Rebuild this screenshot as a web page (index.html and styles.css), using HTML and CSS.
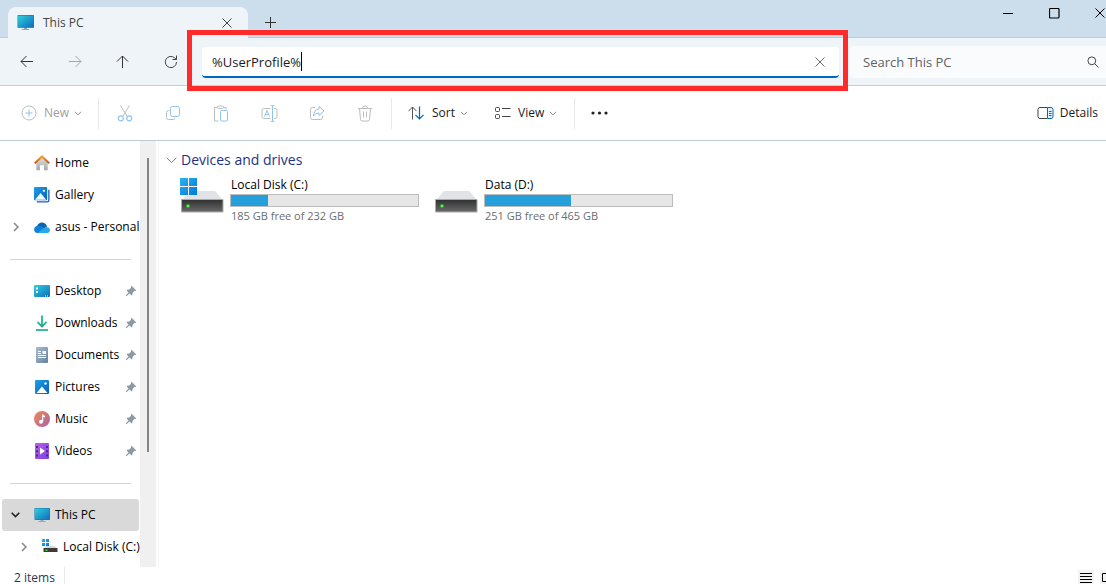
FILE: index.html
```html
<!DOCTYPE html>
<html lang="en">
<head>
<meta charset="utf-8">
<title>This PC</title>
<link rel="stylesheet" href="styles.css">
</head>
<body>
<svg class="defs" aria-hidden="true">
  <defs>
    <linearGradient id="screen" x1="0" y1="0" x2="1" y2="1"><stop offset="0" stop-color="#2fd0dc"/><stop offset="1" stop-color="#0f6cbd"/></linearGradient>
    <linearGradient id="blue" x1="0" y1="0" x2="1" y2="1"><stop offset="0" stop-color="#1fa0e6"/><stop offset="1" stop-color="#0560b8"/></linearGradient>
    <linearGradient id="win" x1="0" y1="0" x2="1" y2="1"><stop offset="0" stop-color="#2bb3f0"/><stop offset="1" stop-color="#0078d7"/></linearGradient>
    <linearGradient id="box" x1="0" y1="0" x2="0" y2="1"><stop offset="0" stop-color="#303030"/><stop offset="1" stop-color="#6a6a6a"/></linearGradient>
    <linearGradient id="music" x1="0" y1="0" x2="1" y2="1"><stop offset="0" stop-color="#f08a54"/><stop offset="1" stop-color="#ac60a8"/></linearGradient>
    <linearGradient id="video" x1="0" y1="0" x2="1" y2="1"><stop offset="0" stop-color="#b95fe6"/><stop offset="1" stop-color="#7d41e0"/></linearGradient>
    <linearGradient id="doc" x1="0" y1="0" x2="1" y2="1"><stop offset="0" stop-color="#a9bdd3"/><stop offset="1" stop-color="#6682a3"/></linearGradient>
    <linearGradient id="wall" x1="0" y1="0" x2="0" y2="1"><stop offset="0" stop-color="#e0e0e0"/><stop offset="1" stop-color="#a8a8a8"/></linearGradient>
    <linearGradient id="roof" x1="0" y1="0" x2="0" y2="1"><stop offset="0" stop-color="#f3a02c"/><stop offset="1" stop-color="#d0501c"/></linearGradient>
    <linearGradient id="down" x1="0" y1="0" x2="0" y2="1"><stop offset="0" stop-color="#2fc3a2"/><stop offset="1" stop-color="#0f9d80"/></linearGradient>
    <symbol id="i-pc" viewBox="0 0 16 16"><path d="M6.500 12h3v2h2v1h-7v-1h2z" fill="#9aa7b2"/><rect x=".5" y="1" width="15.500" height="12" rx=".8" fill="#1273b0"/><rect x="1" y="1.500" width="14.500" height="11" fill="url(#screen)"/></symbol>
    <symbol id="i-pin" viewBox="0 0 12 12"><path d="M6.600.8 11.200 5.400 10.300 6 9.300 5.900 7.500 7.900 7.300 9.800 6.600 10.500 4.500 8.400 1.400 11.300.700 10.600 3.600 7.500 1.500 5.400 2.200 4.700 4.200 4.500 6.100 2.700 6 1.500z" fill="#8c98a2"/></symbol>
    <symbol id="i-chev" viewBox="0 0 8 5"><path d="M1 .8 4 3.800 7 .8" fill="none" stroke="currentColor"/></symbol>
    <symbol id="i-right" viewBox="0 0 6 10"><path d="M1 1 5 5 1 9" fill="none" stroke="#858585" stroke-width="1.500"/></symbol>
    <symbol id="i-x" viewBox="0 0 12 12"><path d="M1.500 1.500l9 9M10.500 1.500l-9 9" fill="none" stroke="currentColor"/></symbol>
    <symbol id="i-drive" viewBox="0 0 44 26"><path d="M10 1h25l8 9H2z" fill="#e1e3e6"/><path d="M1.500 9.500h41.500v12.500H1.500z" fill="url(#box)" stroke="#aaa"/><circle cx="8" cy="16" r="2" fill="#27b52c"/><circle cx="8" cy="16" r="1" fill="#7cff74"/></symbol>
  </defs>
</svg>
<div class="window">
  <header class="titlebar">
    <div class="tab">
      <svg width="17" height="17"><use href="#i-pc"/></svg>
      <span class="tab-name">This PC</span>
      <button class="plain" aria-label="Close tab"><svg width="12" height="12"><use href="#i-x"/></svg></button>
    </div>
    <button class="plain new-tab" aria-label="New tab"><svg width="11" height="11" viewBox="0 0 11 11"><path d="M5.500 0v11M0 5.500h11" stroke="#333"/></svg></button>
    <div class="caption">
      <button class="plain" aria-label="Minimize"><svg width="10" height="11" viewBox="0 0 10 11"><path d="M0 5.500h10" stroke="#000"/></svg></button>
      <button class="plain" aria-label="Maximize"><svg width="11" height="11" viewBox="0 0 11 11"><rect x=".5" y=".5" width="9.500" height="9.500" rx="1" fill="none" stroke="#000" stroke-width="1.200"/></svg></button>
      <button class="plain" aria-label="Close"><svg width="12" height="12"><use href="#i-x"/></svg></button>
    </div>
  </header>

  <nav class="navbar" aria-label="Navigation">
    <button class="plain nav-btn" aria-label="Back"><svg width="14" height="14" viewBox="0 0 14 14"><path d="M13 6.500H1M6.500 1 1 6.500 6.500 12" fill="none" stroke="#333"/></svg></button>
    <button class="plain nav-btn" aria-label="Forward"><svg width="14" height="14" viewBox="0 0 14 14"><path d="M1 6.500H13M7.500 1 13 6.500 7.500 12" fill="none" stroke="#a5a8aa"/></svg></button>
    <button class="plain nav-btn" aria-label="Up"><svg width="14" height="14" viewBox="0 0 14 14"><path d="M6.500 13V1M1 6.500 6.500 1 12 6.500" fill="none" stroke="#333"/></svg></button>
    <button class="plain nav-btn" aria-label="Refresh"><svg width="14" height="14" viewBox="0 0 14 14"><path d="M12.500 7A5.600 5.600 0 1 1 10.800 3L12.500 4.500M12.500.5v4h-4" fill="none" stroke="#444"/></svg></button>
    <div class="address">
      <input class="address-input" type="text" value="%UserProfile%" aria-label="Address"><span class="caret"></span>
      <button class="plain clear" aria-label="Clear"><svg width="12" height="12"><use href="#i-x"/></svg></button>
    </div>
    <div class="search">
      <input class="search-input" type="text" placeholder="Search This PC" aria-label="Search This PC">
      <svg width="12" height="12" viewBox="0 0 12 12"><circle cx="4.800" cy="4.800" r="3.900" fill="none" stroke="#444"/><path d="M7.700 7.700l3.800 3.800" stroke="#444"/></svg>
    </div>
  </nav>

  <div class="toolbar" role="toolbar" aria-label="Commands">
    <button class="cmd new muted"><svg width="16" height="16" viewBox="0 0 16 16"><circle cx="8" cy="8" r="7" fill="none" stroke="#bdbdbd"/><path d="M8 4.500v7M4.500 8h7" stroke="#8fc4ec"/></svg><span>New</span><svg class="chev" width="8" height="5"><use href="#i-chev"/></svg></button>
    <span class="sep"></span>
    <div class="icons">
      <button class="plain" aria-label="Cut"><svg width="16" height="17" viewBox="0 0 16 17"><path d="M3.500.5 10 11M12.500.5 6 11" stroke="#bdbdbd" fill="none"/><circle cx="3.800" cy="13.300" r="2.500" fill="none" stroke="#8fc4ec" stroke-width="1.200"/><circle cx="12.200" cy="13.300" r="2.500" fill="none" stroke="#8fc4ec" stroke-width="1.200"/></svg></button>
      <button class="plain" aria-label="Copy"><svg width="16" height="16" viewBox="0 0 16 16"><path d="M4.500 5.500H3.500Q1.500 5.500 1.500 7.500v5q0 2 2 2h4.500q2 0 2-1.500" fill="none" stroke="#bdbdbd"/><rect x="5.500" y="1.500" width="9" height="10" rx="2" fill="none" stroke="#8fc4ec"/></svg></button>
      <button class="plain" aria-label="Paste"><svg width="16" height="17" viewBox="0 0 16 17"><path d="M4.500 2.500h-3v13.500h4M10.500 2.500h2.500v2" fill="none" stroke="#bdbdbd"/><rect x="4.500" y="1" width="6" height="2.500" rx="1" fill="none" stroke="#bdbdbd"/><rect x="7.500" y="5.500" width="7" height="10.500" rx="1" fill="none" stroke="#8fc4ec"/></svg></button>
      <button class="plain" aria-label="Rename"><svg width="17" height="17" viewBox="0 0 17 17"><path d="M9.500 3.500h-7q-1.500 0-1.500 2v6q0 2 1.500 2h7M13 3.500h1q2 0 2 2v6q0 2-2 2h-1" fill="none" stroke="#bdbdbd"/><path d="M3.500 11.500 6 5.500l2.500 6M4.300 9.500h3.400M9.500.7h4M9.500 16.300h4M11.500.7v15.600" fill="none" stroke="#8fc4ec"/></svg></button>
      <button class="plain" aria-label="Share"><svg width="16" height="16" viewBox="0 0 16 16"><path d="M6 2.500H3.500q-2 0-2 2v8q0 2 2 2h8q2 0 2-2V11" fill="none" stroke="#bdbdbd"/><path d="M10 1.500 15 6l-5 4.500V8Q6.500 7.800 4.500 11 5 4.500 10 4z" fill="none" stroke="#8fc4ec"/></svg></button>
      <button class="plain" aria-label="Delete"><svg width="16" height="17" viewBox="0 0 16 17"><path d="M1 3.500h14M5.500 3q0-2 2.500-2t2.500 2M2.500 3.500l1 11q.2 1.500 1.500 1.500h6q1.300 0 1.500-1.500l1-11M6.500 6.500v6M9.500 6.500v6" fill="none" stroke="#bdbdbd"/></svg></button>
    </div>
    <span class="sep"></span>
    <button class="cmd sort"><svg width="17" height="14" viewBox="0 0 17 14"><path d="M4.500 13.500V1M.5 5.200 4.500 1l4 4.200" fill="none" stroke="#555"/><path d="M11.500.5V13M7.500 8.800l4 4.200 4-4.200" fill="none" stroke="#0067c0" stroke-width="1.200"/></svg><span>Sort</span><svg class="chev" width="8" height="5"><use href="#i-chev"/></svg></button>
    <button class="cmd view"><svg width="17" height="14" viewBox="0 0 17 14"><rect x="1.500" y="1.500" width="4" height="4" rx="1" fill="none" stroke="#444"/><rect x="1.500" y="8.500" width="4" height="4" rx="1" fill="none" stroke="#444"/><path d="M8 2.500h8.500M8 10.500h8.500" stroke="#444"/></svg><span>View</span><svg class="chev" width="8" height="5"><use href="#i-chev"/></svg></button>
    <span class="sep"></span>
    <button class="plain more" aria-label="See more"><svg width="17" height="4" viewBox="0 0 17 4"><g fill="#222"><circle cx="2" cy="2" r="1.600"/><circle cx="8.500" cy="2" r="1.600"/><circle cx="15" cy="2" r="1.600"/></g></svg></button>
    <button class="cmd details"><svg width="17" height="14" viewBox="0 0 17 14"><path d="M10 1.500H3Q1 1.500 1 3.500v7q0 2 2 2h7" fill="none" stroke="#444"/><path d="M10.500 1.500h3.500q2 0 2 2v7q0 2-2 2h-3.500zM12 5.500h2.500M12 7.500h2.500M12 9.500h2.500" fill="#e4f1fb" stroke="#0067c0"/></svg><span>Details</span></button>
  </div>

  <div class="content">
    <aside class="sidebar">
      <a class="row" href="#"><span class="exp"></span><svg width="16" height="16" viewBox="0 0 16 16"><path d="M2.300 7 8 2l5.700 5v8.300H10v-5H6v5H2.300z" fill="url(#wall)"/><path d="M.8 8.300 8 1.500l7.200 6.800" fill="none" stroke="url(#roof)" stroke-width="2"/></svg><span>Home</span></a>
      <a class="row" href="#"><span class="exp"></span><svg width="16" height="16" viewBox="0 0 17 17"><path d="M3 15.800h11q1.800 0 1.800-1.800V3" fill="none" stroke="#1b5cb4" stroke-width="1.400"/><rect x="0" y="0" width="14" height="14" rx="1" fill="url(#blue)"/><path d="M1 13.500 7 6.500l6 7z" fill="#eef8ff"/><circle cx="10.500" cy="4" r="1.200" fill="#fff"/></svg><span>Gallery</span></a>
      <a class="row" href="#"><span class="exp"><svg width="6" height="10"><use href="#i-right"/></svg></span><svg width="16" height="11" viewBox="0 0 16 11"><path d="M3 4Q5 0 8.500.5 12 1 13 4.500L8 8 2 6z" fill="#0364b8"/><path d="M.2 8Q0 4.500 3 4q3-.8 6 1.500L13 7l-4 4H3.500Q.5 10.800.2 8z" fill="#0f80d7"/><path d="M4 10.500 11 5.200q4-1.200 5 2.300 0 3.500-3 3.500H4z" fill="#28a8ea"/></svg><span>asus - Personal</span></a>
      <hr>
      <a class="row" href="#"><span class="exp"></span><svg width="16" height="12" viewBox="0 0 16 12"><rect width="16" height="12" rx="1" fill="url(#screen)"/><path d="M2 2.500h2v2H2zM2 6h2v2H2z" fill="#fff"/><path d="M11 11h4" stroke="#fff" stroke-dasharray="1 1"/></svg><span>Desktop</span><svg class="pin" width="12" height="12"><use href="#i-pin"/></svg></a>
      <a class="row" href="#"><span class="exp"></span><svg width="16" height="16" viewBox="0 0 16 16"><path d="M3.500 7 8 11.500 12.500 7" fill="none" stroke="url(#down)" stroke-width="1.800"/><path d="M2 15h12" stroke="#14a588" stroke-width="1.600"/><path d="M7.100.5h1.800v10.500H7.100z" fill="#22b393"/></svg><span>Downloads</span><svg class="pin" width="12" height="12"><use href="#i-pin"/></svg></a>
      <a class="row" href="#"><span class="exp"></span><svg width="16" height="16" viewBox="0 0 16 16"><rect x="2" width="12" height="16" rx="1" fill="url(#doc)"/><path d="M4 4.500h3M4 6.500h3M4 8.500h8M4 10.500h8" stroke="#fff"/><path d="M8.500 4H12v3H8.500z" fill="#fff"/></svg><span>Documents</span><svg class="pin" width="12" height="12"><use href="#i-pin"/></svg></a>
      <a class="row" href="#"><span class="exp"></span><svg width="16" height="16" viewBox="0 0 16 16"><rect x="1" y="1" width="14" height="14" rx="1" fill="url(#blue)"/><path d="M2.500 14 8 7.500l5.500 6.500z" fill="#fff"/><circle cx="11.500" cy="4.500" r="1.200" fill="#fff"/></svg><span>Pictures</span><svg class="pin" width="12" height="12"><use href="#i-pin"/></svg></a>
      <a class="row" href="#"><span class="exp"></span><svg width="16" height="16" viewBox="0 0 16 16"><circle cx="8" cy="8" r="8" fill="url(#music)"/><circle cx="7" cy="10.700" r="2" fill="#fff"/><path d="M8 3.500h1.200L11 5v1.500L9.200 6v4.500H8z" fill="#fff"/></svg><span>Music</span><svg class="pin" width="12" height="12"><use href="#i-pin"/></svg></a>
      <a class="row" href="#"><span class="exp"></span><svg width="16" height="16" viewBox="0 0 16 16"><rect x="1" width="14" height="16" rx="1" fill="url(#video)"/><path d="M3 3v11M13 3v11" stroke="#3f1d80" stroke-width="1.600" stroke-dasharray="2 2.300"/><path d="M6 4.500 11 8l-5 3.500z" fill="#fff"/></svg><span>Videos</span><svg class="pin" width="12" height="12"><use href="#i-pin"/></svg></a>
      <hr>
      <a class="row selected" href="#"><span class="exp"><svg width="9" height="6" viewBox="0 0 9 6"><path d="M.7.8 4.500 4.600 8.300.8" fill="none" stroke="#222" stroke-width="1.600"/></svg></span><svg width="16" height="16"><use href="#i-pc"/></svg><span>This PC</span></a>
      <a class="row child" href="#"><span class="exp"><svg width="6" height="10"><use href="#i-right"/></svg></span><svg width="16" height="16" viewBox="0 0 16 16"><path d="M4 7h9l2 2.500H2z" fill="#d8dadc"/><path d="M1.500 9h14v4h-14z" fill="#3b3b3b"/><path d="M3.500 10.500h2v1.500h-2z" fill="#3be03b"/><path d="M0 0h3v3H0zM4 0h3v3H4zM0 4h3v3H0zM4 4h3v3H4z" fill="url(#win)"/></svg><span>Local Disk (C:)</span></a>
    </aside>
    <div class="scroll"><div class="thumb"></div></div>
    <main class="pane">
      <h1 class="group"><svg width="11" height="7" viewBox="0 0 11 7"><path d="M.7.8 5.500 5.600 10.300.8" fill="none" stroke="#777"/></svg><span>Devices and drives</span></h1>
      <div class="drives">
        <div class="drive">
          <svg width="44" height="38" viewBox="0 0 44 38"><svg y="13" width="44" height="26"><use href="#i-drive"/></svg><path d="M0 1h8v8H0zM9 1h8v8H9zM0 10h8v8H0zM9 10h8v8H9z" fill="url(#win)"/></svg>
          <div class="info"><span class="name">Local Disk (C:)</span><div class="bar"><div class="used" style="width:20%"></div></div><span class="free">185 GB free of 232 GB</span></div>
        </div>
        <div class="drive">
          <svg width="44" height="38" viewBox="0 0 44 38"><svg y="13" width="44" height="26"><use href="#i-drive"/></svg></svg>
          <div class="info"><span class="name">Data (D:)</span><div class="bar"><div class="used" style="width:46%"></div></div><span class="free">251 GB free of 465 GB</span></div>
        </div>
      </div>
    </main>
  </div>

  <footer class="status">
    <span class="count">2 items</span>
    <div class="modes">
      <button class="plain mode" aria-label="Details view"><svg width="12" height="14" viewBox="0 0 12 14"><path d="M0 .5h12M0 3.500h12M0 6.500h12M0 9.500h12" stroke="#000"/></svg></button>
      <button class="plain mode" aria-label="Large icons"><svg width="12" height="14" viewBox="0 0 12 14"><path d="M.5.5h11v8H.5zM0 11.500h12" fill="none" stroke="#000"/></svg></button>
    </div>
  </footer>
</div>
</body>
</html>
```
FILE: styles.css
```css
* { box-sizing: border-box; }
body {
  margin: 0;
  overflow: hidden;
  font: 12px/16px "Open Sans", "Noto Sans", sans-serif;
  color: #000;
}
svg { display: block; flex: none; }
.defs { position: absolute; width: 0; height: 0; }
button, input { font: inherit; color: inherit; border: 0; background: none; padding: 0; margin: 0; outline: 0; }
.plain { display: flex; align-items: center; justify-content: center; flex: none; }

.window { display: flex; flex-direction: column; height: 100vh; overflow: hidden; background: #fff; }

.titlebar { display: flex; flex: none; height: 38px; background: #ccdeeb; border-bottom: 1px solid #b9cddd; padding-left: 8px; }
.tab { display: flex; align-items: center; width: 240px; height: 31px; margin-top: 7px; padding: 0 15px 0 9px; border-radius: 8px 8px 0 0; background: #eff4f9; color: #444; }
.tab-name { flex: 1; margin-left: 9px; }
.new-tab { width: 45px; padding-top: 7px; }
.caption { display: flex; margin-left: auto; margin-right: -17px; height: 26px; }
.caption .plain { width: 46px; }

.navbar { display: flex; align-items: center; flex: none; height: 48px; padding-left: 3px; background: #eff4f9; border-bottom: 1px solid #c3d0db; }
.nav-btn { width: 48px; }
.address {
  position: relative;
  display: flex;
  align-items: center;
  flex: 1;
  height: 31px;
  margin: 2px 0 0 7px;
  padding: 0 13px 0 10px;
  border-bottom: 2px solid #0067c0;
  border-radius: 4px;
  background: #fff;
}
.address::after { content: ""; position: absolute; inset: -17px -9px -15px -15px; border: 5px solid #ff2b2b; pointer-events: none; }
.address-input { field-sizing: content; font-size: 13px; color: #1a1a1a; }
.caret { width: 1px; height: 19px; background: #000; }
.clear { margin-left: auto; color: #666; }
.search { display: flex; align-items: center; flex: 0 0 256px; height: 32px; margin-left: 11px; padding: 0 7px 0 13px; border-radius: 4px 0 0 4px; background: #fafbfd; }
.search-input { flex: 1; min-width: 0; font-size: 13px; }
.search-input::placeholder { color: #5f6265; opacity: 1; }

.toolbar { display: flex; align-items: center; flex: none; height: 55px; border-bottom: 1px solid #bccbd8; }
.cmd { display: flex; align-items: center; gap: 7px; flex: none; color: #1a1a1a; }
.cmd.muted { color: #a0a0a0; }
.chev { color: #8a8a8a; margin-left: -2px; }
.new { width: 98px; padding-left: 21px; }
.sep { width: 1px; height: 31px; background: #e8e8e8; }
.icons { display: flex; padding: 0 2px; }
.icons .plain { width: 48px; }
.sort { width: 86px; padding-left: 16px; }
.view { width: 96px; padding-left: 16px; }
.more { width: 48px; }
.details { margin-left: auto; padding-right: 8px; gap: 6px; }

.content { display: flex; flex: 1; min-height: 0; }
.sidebar { flex: 0 0 140px; min-width: 0; padding: 6px 1px 0 2px; }
.row { display: flex; align-items: center; height: 32px; gap: 5px; padding-right: 2px; border-radius: 3px; color: inherit; text-decoration: none; white-space: nowrap; }
.exp { display: flex; flex: none; justify-content: center; width: 27px; }
.pin { margin-left: auto; }
.row.selected { background: #d9d9d9; }
.child { padding-left: 8px; }
hr { height: 1px; margin: 16px 8px 15px; border: 0; background: #d4d4d4; }
.scroll { flex: 0 0 16px; padding-top: 17px; background: #f0f0f0; }
.thumb { width: 2px; height: 294px; margin-left: 7px; background: #858585; }
.pane { flex: 1; min-width: 0; margin-left: 2px; padding: 9px 0; border-left: 1px solid #f3f3f3; }
.group { display: flex; align-items: center; gap: 4px; margin: 0; padding-left: 7px; font-size: 14px; line-height: 20px; font-weight: 400; color: #1e3287; }
.drives { display: grid; grid-template-columns: repeat(auto-fill, 254px); padding: 7px 0 0 21px; }
.drive { display: flex; gap: 6px; }
.info { width: 189px; }
.name, .free { display: block; padding-left: 1px; }
.bar { height: 13px; margin: 1px 0; border: 1px solid #bcbcbc; background: #e6e6e6; }
.used { height: 100%; background: #26a0da; }
.free { font-size: 11px; color: #6d6d6d; }

.status { display: flex; flex: none; height: 17px; padding-left: 14px; }
.count { padding: 5px 9px 0 0; border-right: 1px solid #e8e8e8; line-height: 12px; color: #1e395b; }
.modes { display: flex; gap: 6px; margin-left: auto; margin-right: -10px; padding-top: 3px; }
.mode { width: 16px; height: 20px; background: #f3f3f3; }
```
